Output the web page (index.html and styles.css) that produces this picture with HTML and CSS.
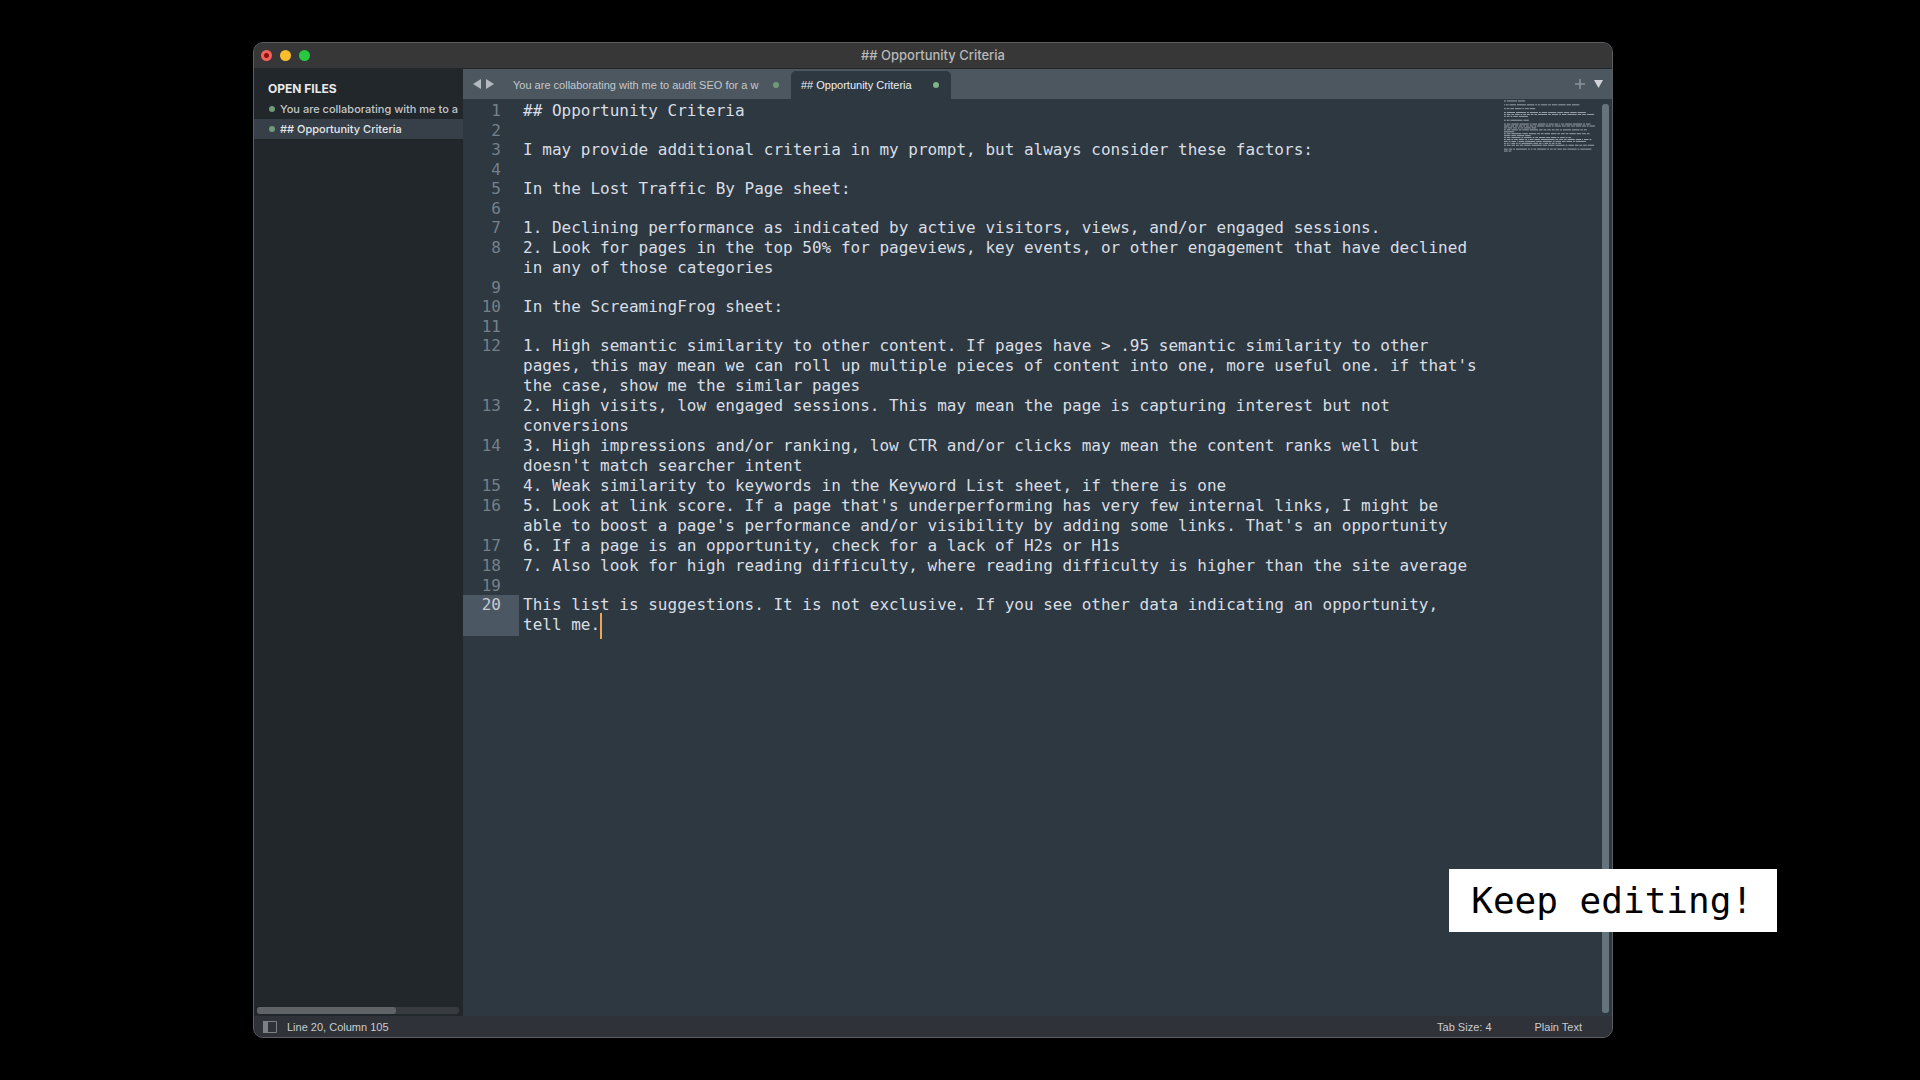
FILE: index.html
```html
<!DOCTYPE html>
<html lang="en">
<head>
<meta charset="utf-8">
<meta name="viewport" content="width=device-width, initial-scale=1">
<title>## Opportunity Criteria</title>
<link rel="stylesheet" href="styles.css">
</head>
<body>
<main class="window">
  <header class="titlebar">
    <div class="lights">
      <button class="light light-close" aria-label="Close"></button>
      <button class="light light-minimize" aria-label="Minimize"></button>
      <button class="light light-zoom" aria-label="Zoom"></button>
    </div>
    <h1 class="title">## Opportunity Criteria</h1>
  </header>
  <div class="body">
    <aside class="sidebar">
      <h2 class="sidebar-heading">OPEN FILES</h2>
      <nav class="files">
        <a class="file" href="#audit"><span class="dot"></span>You are collaborating with me to a</a>
        <a class="file file-active" href="#criteria"><span class="dot"></span>## Opportunity Criteria</a>
      </nav>
      <div class="hscroll"><div class="hscroll-thumb"></div></div>
    </aside>
    <section class="pane">
      <div class="tabbar">
        <button class="icon-button" aria-label="Previous tab"><svg width="8" height="10" viewBox="0 0 8 10"><path d="M8 0v10L0 5z" fill="currentColor"/></svg></button>
        <button class="icon-button" aria-label="Next tab"><svg width="8" height="10" viewBox="0 0 8 10"><path d="M0 0v10l8-5z" fill="currentColor"/></svg></button>
        <button class="tab tab-first"><span>You are collaborating with me to audit SEO for a w</span><span class="dot"></span></button>
        <button class="tab tab-active"><span>## Opportunity Criteria</span><span class="dot"></span></button>
        <div class="tab-tools">
          <button class="icon-button tool-add" aria-label="New tab"><svg width="10" height="10" viewBox="0 0 10 10"><path d="M5 0v10M0 5h10" stroke="currentColor" stroke-width="1.6"/></svg></button>
          <button class="icon-button tool-list" aria-label="Tab list"><svg width="9" height="8" viewBox="0 0 9 8"><path d="M0 0h9L4.500 8z" fill="currentColor"/></svg></button>
        </div>
      </div>
      <div class="editor" id="criteria">
        <div class="code">
          <div class="line"><span class="num">1</span><span class="text">## Opportunity Criteria</span></div>
          <div class="line blank"><span class="num">2</span></div>
          <div class="line"><span class="num">3</span><span class="text">I may provide additional criteria in my prompt, but always consider these factors:</span></div>
          <div class="line blank"><span class="num">4</span></div>
          <div class="line"><span class="num">5</span><span class="text">In the Lost Traffic By Page sheet:</span></div>
          <div class="line blank"><span class="num">6</span></div>
          <div class="line"><span class="num">7</span><span class="text">1. Declining performance as indicated by active visitors, views, and/or engaged sessions.</span></div>
          <div class="line"><span class="num">8</span><span class="text">2. Look for pages in the top 50% for pageviews, key events, or other engagement that have declined in any of those categories</span></div>
          <div class="line blank"><span class="num">9</span></div>
          <div class="line"><span class="num">10</span><span class="text">In the ScreamingFrog sheet:</span></div>
          <div class="line blank"><span class="num">11</span></div>
          <div class="line"><span class="num">12</span><span class="text">1. High semantic similarity to other content. If pages have &gt; .95 semantic similarity to other pages, this may mean we can roll up multiple pieces of content into one, more useful one. if that's the case, show me the similar pages</span></div>
          <div class="line"><span class="num">13</span><span class="text">2. High visits, low engaged sessions. This may mean the page is capturing interest but not conversions</span></div>
          <div class="line"><span class="num">14</span><span class="text">3. High impressions and/or ranking, low CTR and/or clicks may mean the content ranks well but doesn't match searcher intent</span></div>
          <div class="line"><span class="num">15</span><span class="text">4. Weak similarity to keywords in the Keyword List sheet, if there is one</span></div>
          <div class="line"><span class="num">16</span><span class="text">5. Look at link score. If a page that's underperforming has very few internal links, I might be<br>able to boost a page's performance and/or visibility by adding some links. That's an opportunity</span></div>
          <div class="line"><span class="num">17</span><span class="text">6. If a page is an opportunity, check for a lack of H2s or H1s</span></div>
          <div class="line"><span class="num">18</span><span class="text">7. Also look for high reading difficulty, where reading difficulty is higher than the site average</span></div>
          <div class="line blank"><span class="num">19</span></div>
          <div class="line current"><span class="num">20</span><span class="text">This list is suggestions. It is not exclusive. If you see other data indicating an opportunity,<br>tell me.<span class="caret"></span></span></div>
        </div>
        <svg class="minimap" viewBox="0 0 100 54" preserveAspectRatio="none" aria-hidden="true">
          <path d="M0 1h2m1 0h11m1 0h8
M0 5h1m1 0h3m1 0h7m1 0h10m1 0h8m1 0h2m1 0h2m1 0h7m1 0h3m1 0h6m1 0h8m1 0h5m1 0h8
M0 9h2m1 0h3m1 0h4m1 0h7m1 0h2m1 0h4m1 0h6
M0 13h2m1 0h9m1 0h11m1 0h2m1 0h9m1 0h2m1 0h6m1 0h9m1 0h6m1 0h6m1 0h7m1 0h9
M0 15h2m1 0h4m1 0h3m1 0h5m1 0h2m1 0h3m1 0h3m1 0h3m1 0h3m1 0h10m1 0h3m1 0h7m1 0h2m1 0h5m1 0h10m1 0h4m1 0h4m1 0h8
M0 17h2m1 0h3m1 0h2m1 0h5m1 0h10
M0 21h2m1 0h3m1 0h13m1 0h6
M0 25h2m1 0h4m1 0h8m1 0h10m1 0h2m1 0h5m1 0h8m1 0h2m1 0h5m1 0h4m1 0h1m1 0h3m1 0h8m1 0h10m1 0h2m1 0h5
M0 27h6m1 0h4m1 0h3m1 0h4m1 0h2m1 0h3m1 0h4m1 0h2m1 0h8m1 0h6m1 0h2m1 0h7m1 0h4m1 0h4m1 0h4m1 0h6m1 0h4m1 0h2m1 0h6
M0 29h3m1 0h5m1 0h4m1 0h2m1 0h3m1 0h7m1 0h5
M0 31h2m1 0h4m1 0h7m1 0h3m1 0h7m1 0h9m1 0h4m1 0h3m1 0h4m1 0h3m1 0h4m1 0h2m1 0h9m1 0h8m1 0h3m1 0h3
M0 33h11
M0 35h2m1 0h4m1 0h11m1 0h6m1 0h8m1 0h3m1 0h3m1 0h6m1 0h6m1 0h3m1 0h4m1 0h3m1 0h7m1 0h5m1 0h4m1 0h3
M0 37h7m1 0h5m1 0h8m1 0h6
M0 39h2m1 0h4m1 0h10m1 0h2m1 0h8m1 0h2m1 0h3m1 0h7m1 0h4m1 0h6m1 0h2m1 0h5m1 0h2m1 0h3
M0 41h2m1 0h4m1 0h2m1 0h4m1 0h6m1 0h2m1 0h1m1 0h4m1 0h6m1 0h15m1 0h3m1 0h4m1 0h3m1 0h8m1 0h6m1 0h1m1 0h5m1 0h2
M0 43h4m1 0h2m1 0h5m1 0h1m1 0h6m1 0h11m1 0h6m1 0h10m1 0h2m1 0h6m1 0h4m1 0h6m1 0h2m1 0h11
M0 45h2m1 0h2m1 0h1m1 0h4m1 0h2m1 0h2m1 0h12m1 0h5m1 0h3m1 0h1m1 0h4m1 0h2m1 0h3m1 0h2m1 0h3
M0 47h2m1 0h4m1 0h4m1 0h3m1 0h4m1 0h7m1 0h11m1 0h5m1 0h7m1 0h10m1 0h2m1 0h6m1 0h4m1 0h3m1 0h4m1 0h7
M0 51h4m1 0h4m1 0h2m1 0h12m1 0h2m1 0h2m1 0h3m1 0h10m1 0h2m1 0h3m1 0h3m1 0h5m1 0h4m1 0h10m1 0h2m1 0h12
M0 53h4m1 0h3" fill="none" stroke="currentColor" stroke-width="1"/>
        </svg>
        <div class="vscroll"></div>
      </div>
    </section>
  </div>
  <footer class="statusbar">
    <button class="icon-button status-toggle" aria-label="Toggle side bar"><svg width="14" height="12" viewBox="0 0 14 12"><path d="M.5.5h13v11H.5z" fill="none" stroke="currentColor"/><path d="M0 0h5v12H0z" fill="currentColor"/></svg></button>
    <span class="status-position">Line 20, Column 105</span>
    <button class="status-item">Tab Size: 4</button>
    <button class="status-item">Plain Text</button>
  </footer>
</main>
<div class="callout">Keep editing!</div>
</body>
</html>
```
FILE: styles.css
```css
* {
  box-sizing: border-box;
}

body {
  display: flex;
  min-height: 100vh;
  margin: 0;
  padding: 42px 307px 42px 253px;
  background: #000;
  color: #d8dee4;
  font: 12px/20px Inter, "Liberation Sans", sans-serif;
}

button {
  padding: 0;
  border: 0;
  background: none;
  color: inherit;
  font: inherit;
}

.window {
  display: flex;
  flex: 1;
  flex-direction: column;
  min-width: 0;
  overflow: hidden;
  border: 1px solid #5b5f62;
  border-radius: 10px;
  background: #2e3841;
}

.titlebar {
  display: grid;
  grid-template-columns: 1fr auto 1fr;
  align-items: center;
  height: 26px;
  padding: 0 7px;
  border-bottom: 1px solid #22272b;
  background: #373737;
}

.lights {
  display: flex;
  gap: 8px;
}

.light {
  width: 11px;
  height: 11px;
  border-radius: 50%;
}

.light-close {
  background: radial-gradient(circle, #8c0f0c 0 2px, #f4605b 3px);
}

.light-minimize {
  background: #fbbd2e;
}

.light-zoom {
  background: #28c840;
}

.title {
  margin: 0;
  padding-bottom: 1px;
  color: #b9b9b9;
  font-size: 13px;
  font-weight: 500;
}

.body {
  display: flex;
  flex: 1;
}

.sidebar {
  display: flex;
  flex: 0 0 209px;
  flex-direction: column;
  padding: 9px 0 2px;
  background: #22272b;
}

.sidebar-heading {
  margin: 0;
  padding-left: 14px;
  color: #e8eaec;
  font-size: 12px;
  font-weight: 700;
  line-height: 21px;
}

.files {
  display: flex;
  flex-direction: column;
}

.file {
  display: flex;
  gap: 5px;
  align-items: center;
  overflow: hidden;
  padding-left: 15px;
  color: #c3c6c9;
  font-size: 11px;
  font-weight: 500;
  text-decoration: none;
  white-space: nowrap;
}

.file-active {
  background: #373f48;
  color: #e3e6e9;
}

.dot {
  flex: none;
  width: 6px;
  height: 6px;
  border-radius: 50%;
  background: #709a78;
}

.hscroll {
  margin: auto 4px 0 3px;
  border-radius: 3px;
  background: #383c40;
}

.hscroll-thumb {
  width: 69%;
  height: 7px;
  border-radius: 3px;
  background: #606466;
}

.pane {
  display: flex;
  flex: 1;
  flex-direction: column;
  min-width: 0;
}

.tabbar {
  display: flex;
  align-items: center;
  height: 30px;
  padding-left: 10px;
  gap: 5px;
  background: #4d5760;
}

.icon-button {
  display: flex;
  color: #b4babf;
}

.tab {
  display: flex;
  align-items: center;
  justify-content: space-between;
  align-self: flex-end;
  height: 28px;
  padding-bottom: 1px;
  white-space: nowrap;
  color: #c3c8cc;
  font: 11px/20px "Liberation Sans", sans-serif;
}

.tab-first {
  width: 292px;
  padding-right: 12px;
  padding-left: 14px;
}

.tab-active {
  width: 160px;
  margin-left: -5px;
  padding-right: 12px;
  padding-left: 10px;
  border-radius: 5px 5px 0 0;
  background: #2e3841;
  color: #eceff1;
}

.tab-active .dot {
  background: #7db486;
}

.tab-tools {
  display: flex;
  gap: 9px;
  align-items: center;
  margin-left: auto;
  padding-right: 9px;
}

.tool-add {
  color: #8b9299;
}

.tool-list {
  color: #d0d4d8;
}

.editor {
  display: flex;
  flex: 1;
}

.code {
  flex: 1;
  min-width: 0;
  padding-top: 2px;
  font: 16px/20px "DejaVu Sans Mono", "Liberation Mono", monospace;
}

.line {
  display: flex;
  min-height: 20px;
}

.blank {
  height: 19px;
  min-height: 19px;
}

.num {
  flex: 0 0 56px;
  padding-right: 18px;
  color: #75808a;
  text-align: right;
}

.current .num {
  background: #4b5762;
  color: #c6ccd2;
}

.text {
  max-width: 970px;
  padding-left: 4px;
}

.caret {
  display: inline-block;
  width: 2px;
  height: 26px;
  margin: -3px 0;
  background: #eda552;
  vertical-align: middle;
}

.minimap {
  flex: none;
  width: 92px;
  height: 52px;
  margin: 1px 6px 0 0;
  color: #9da6ae;
}

.vscroll {
  width: 7px;
  margin: 5px 3px 3px 0;
  border-radius: 3px;
  background: #65747a;
}

.statusbar {
  display: flex;
  align-items: center;
  height: 21px;
  padding: 0 30px 0 9px;
  background: #2f3238;
  color: #c9cccf;
  font: 11px/20px "Liberation Sans", sans-serif;
}

.status-toggle {
  margin-right: 10px;
  color: #7b8085;
}

.status-position {
  margin-right: auto;
}

.status-item {
  margin-left: 43px;
}

.callout {
  position: absolute;
  right: 143px;
  bottom: 148px;
  padding: 1px 24px 0 22px;
  background: #fff;
  color: #000;
  font: 36px/62px "DejaVu Sans Mono", "Liberation Mono", monospace;
}
```
